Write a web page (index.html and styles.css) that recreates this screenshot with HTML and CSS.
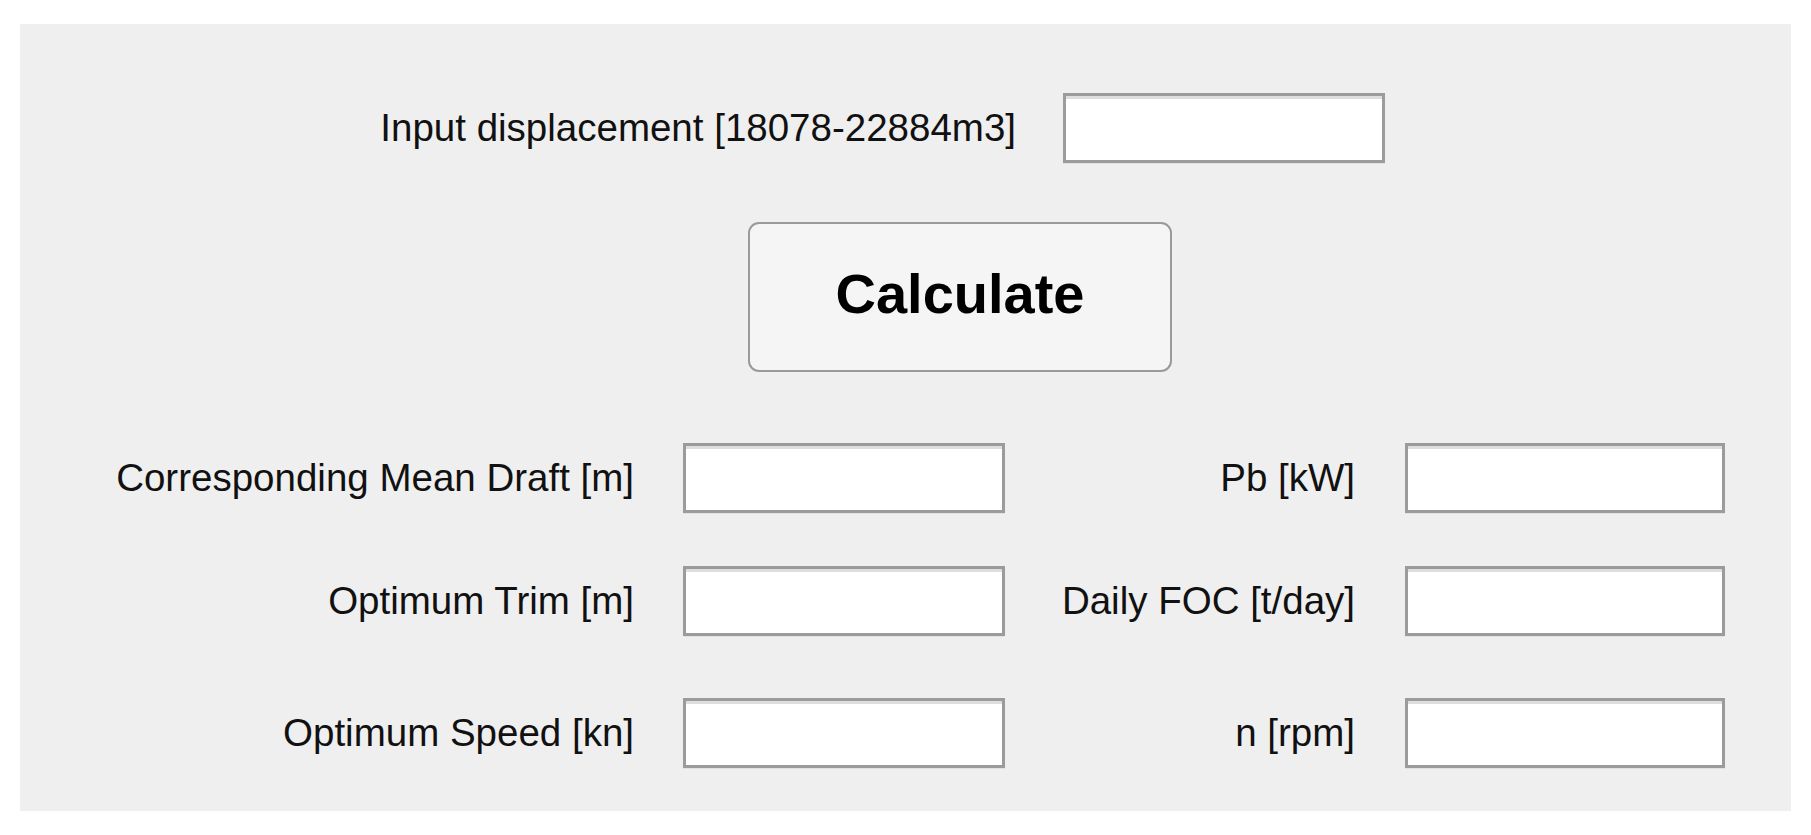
FILE: index.html
```html
<!DOCTYPE html>
<html lang="en">
<head>
<meta charset="utf-8">
<title>Optimum Trim Calculator</title>
<link rel="stylesheet" href="styles.css">
</head>
<body>
<div class="panel">
  <div class="top-row">
    <label class="top-label">Input displacement [18078-22884m3]</label>
    <div class="field"></div>
  </div>
  <div class="button-row">
    <button class="calc-btn">Calculate</button>
  </div>
  <div class="fields">
    <div class="row row1">
      <span class="lbl">Corresponding Mean Draft [m]</span>
      <div class="field"></div>
      <span class="lbl lbl-right">Pb [kW]</span>
      <div class="field field-right"></div>
    </div>
    <div class="row row2">
      <span class="lbl">Optimum Trim [m]</span>
      <div class="field"></div>
      <span class="lbl lbl-right">Daily FOC [t/day]</span>
      <div class="field field-right"></div>
    </div>
    <div class="row row3">
      <span class="lbl">Optimum Speed [kn]</span>
      <div class="field"></div>
      <span class="lbl lbl-right">n [rpm]</span>
      <div class="field field-right"></div>
    </div>
  </div>
</div>
</body>
</html>
```

FILE: styles.css
```css
html, body {
  margin: 0;
  background: #ffffff;
}

body {
  padding: 24px 0 0 20px;
  font-family: "Liberation Sans", Arial, sans-serif;
  color: #111111;
}

.panel {
  width: 1771px;
  height: 787px;
  background: #efefef;
  box-sizing: border-box;
  padding-top: 69px;
}

.top-row {
  display: flex;
  align-items: center;
  height: 70px;
}

.top-label {
  width: 1043px;
  box-sizing: border-box;
  padding-right: 47px;
  text-align: right;
  font-size: 38.5px;
  white-space: nowrap;
}

.field {
  width: 322px;
  height: 70px;
  box-sizing: border-box;
  background: #ffffff;
  border: 3px solid #9b9b9b;
  box-shadow: inset 0 3px 0 #dedede, 0 1px 0 #e2e2e2;
}

.field-right {
  width: 320px;
}

.button-row {
  display: flex;
  margin-top: 59px;
  padding-left: 728px;
}

.calc-btn {
  width: 424px;
  height: 150px;
  box-sizing: border-box;
  margin: 0;
  padding: 0 0 8px 0;
  background: #f5f5f5;
  border: 2px solid #9a9a9a;
  border-radius: 11px;
  font-family: "Liberation Sans", Arial, sans-serif;
  font-weight: bold;
  font-size: 56px;
  color: #000000;
  display: flex;
  align-items: center;
  justify-content: center;
}

.fields {
  margin-top: 71px;
}

.row {
  display: grid;
  grid-template-columns: 663px 322px 400px 320px;
  align-items: center;
  height: 70px;
}

.row2 {
  margin-top: 53px;
}

.row3 {
  margin-top: 62px;
}

.lbl {
  box-sizing: border-box;
  padding-right: 49px;
  text-align: right;
  font-size: 38.5px;
  white-space: nowrap;
}

.lbl-right {
  padding-right: 50px;
}
```
